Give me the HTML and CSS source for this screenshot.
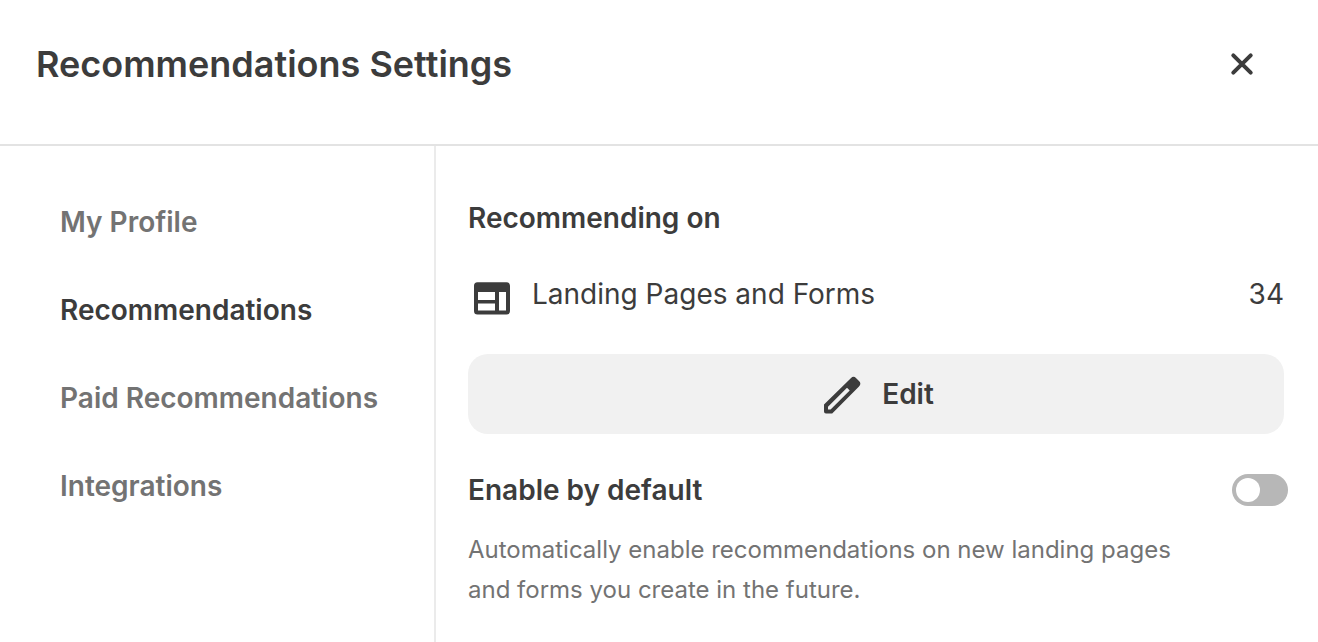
FILE: index.html
```
<!DOCTYPE html>
<html lang="en">
<head>
<meta charset="utf-8">
<meta name="viewport" content="width=device-width, initial-scale=1">
<title>Recommendations Settings</title>
<link rel="stylesheet" href="styles.css">
</head>
<body>
<header class="header">
  <h1 class="title">Recommendations Settings</h1>
  <button class="close" type="button" aria-label="Close">
    <svg width="24" height="24" viewBox="0 0 24 24" fill="none" stroke="currentColor" stroke-width="4" stroke-linecap="round" aria-hidden="true"><path d="M3.300 3.300 20.700 20.700M20.700 3.300 3.300 20.700"/></svg>
  </button>
</header>
<div class="body">
  <nav class="nav" aria-label="Settings">
    <a class="nav-link" href="#profile">My Profile</a>
    <a class="nav-link active" href="#recommendations" aria-current="page">Recommendations</a>
    <a class="nav-link" href="#paid">Paid Recommendations</a>
    <a class="nav-link" href="#integrations">Integrations</a>
  </nav>
  <main class="main">
    <h2 class="heading">Recommending on</h2>
    <div class="row">
      <svg width="48" height="48" viewBox="0 0 48 48" fill="currentColor" fill-rule="evenodd" aria-hidden="true"><path d="M9.500 8.200h29a3.500 3.500 0 0 1 3.500 3.500V37a3.500 3.500 0 0 1-3.500 3.500h-29A3.500 3.500 0 0 1 6 37V11.700a3.500 3.500 0 0 1 3.500-3.500zM10 18v8h17v-8zM10 29.600V36.500h17v-6.900zM31 18v18.500h7V18z"/></svg>
      <span class="row-label">Landing Pages and Forms</span>
      <span class="row-count">34</span>
    </div>
    <button class="edit" type="button">
      <svg width="48" height="48" viewBox="0 0 48 48" fill="currentColor" fill-rule="evenodd" aria-hidden="true"><path d="M6 34.600 32.800 8.200a3.800 3.800 0 0 1 5.400 0l2.800 2.800a3.800 3.800 0 0 1 0 5.400L14.200 43.500H8a2 2 0 0 1-2-2zM10 36.800v2.700h2.600L31.700 20.400l-2.700-2.700z"/></svg>
      <span>Edit</span>
    </button>
    <div class="setting">
      <label class="heading" for="default-on">Enable by default</label>
      <input class="switch" id="default-on" type="checkbox" role="switch" aria-describedby="default-help">
    </div>
    <p class="help" id="default-help">Automatically enable recommendations on new landing pages and forms you create in the future.</p>
  </main>
</div>
</body>
</html>
```
FILE: styles.css
```
* { box-sizing: border-box; }
body {
  margin: 0;
  min-height: 100vh;
  display: flex;
  flex-direction: column;
  background: #fff;
  color: #3c3c3c;
  font-family: Inter, "Liberation Sans", sans-serif;
  font-size: 28px;
  line-height: 40px;
}
button { font: inherit; color: inherit; border: 0; cursor: pointer; }
.header {
  display: flex;
  justify-content: space-between;
  align-items: flex-start;
  padding: 40px 52px 56px 36px;
  border-bottom: 2px solid #e3e3e3;
}
.title { margin: 0; font-size: 36px; line-height: 48px; font-weight: 600; }
.close { display: flex; padding: 12px; background: none; }
.body { flex: 1; display: flex; }
.nav {
  flex: 0 0 436px;
  display: flex;
  flex-direction: column;
  gap: 48px;
  padding: 56px 24px 56px 60px;
  border-right: 2px solid #ebebeb;
}
.nav-link { color: #737373; font-weight: 600; text-decoration: none; }
.nav-link.active { color: #3c3c3c; }
.main { flex: 1; padding: 52px 34px 32px 32px; }
.heading { margin: 0; font-size: 28px; line-height: 40px; font-weight: 600; }
.row { display: flex; align-items: flex-start; gap: 16px; margin-top: 36px; }
.row-label { flex: 1; }
.edit {
  display: flex;
  justify-content: center;
  align-items: center;
  gap: 16px;
  width: 100%;
  height: 80px;
  margin-top: 32px;
  border-radius: 20px;
  background: #f1f1f1;
  font-weight: 600;
}
.setting { display: flex; justify-content: space-between; align-items: center; margin: 36px -4px 0 0; }
.switch {
  appearance: none;
  width: 56px;
  height: 32px;
  margin: 0;
  padding: 4px;
  border-radius: 16px;
  background: #b7b7b7;
  cursor: pointer;
}
.switch::before { content: ""; display: block; width: 24px; height: 24px; border-radius: 50%; background: #fff; }
.switch:checked { background: #3c3c3c; }
.switch:checked::before { margin-left: auto; }
.help { max-width: 720px; margin: 20px 0 0; font-size: 24px; line-height: 40px; color: #737373; }
```
